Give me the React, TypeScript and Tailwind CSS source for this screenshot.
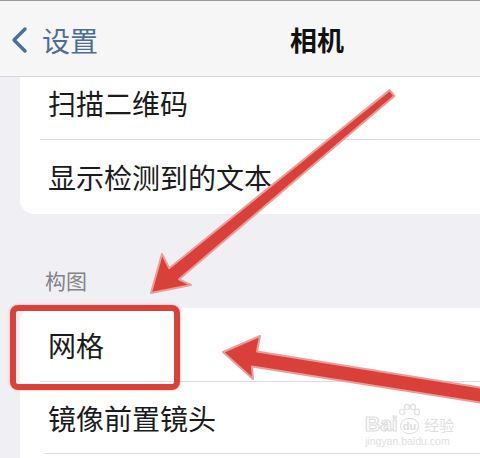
const FONT = { fontFamily: '"Noto Sans CJK SC", "Noto Sans", sans-serif' }

function BackChevron() {
  return (
    <svg width="22" height="28" viewBox="0 0 22 28" className="shrink-0">
      <polyline
        points="17,3 6,14 17,25"
        fill="none"
        stroke="#4a6f98"
        strokeWidth="3.4"
        strokeLinecap="round"
        strokeLinejoin="round"
      />
    </svg>
  )
}

function Row({ label, height, pad = "" }: { label: string; height: string; pad?: string }) {
  return (
    <div className={`flex items-center pl-[28px] ${height} ${pad}`}>
      <span className="text-[28px] leading-[32px] text-[#1b1b1d]">{label}</span>
    </div>
  )
}

function Arrows() {
  return (
    <svg width="480" height="458" viewBox="0 0 480 458" className="absolute left-0 top-0 pointer-events-none">
      {/* long arrow from top right down to the section */}
      <polygon
        points="389.6,90.1 169.2,268.3 162,254 151,293 191,285 179,279.3 394.4,95.9"
        fill="#d9403a"
        stroke="#ec9d97"
        strokeWidth="2"
        strokeLinejoin="round"
      />
      {/* arrow from the right pointing at the row */}
      <polygon
        points="223,352 260,336 257,351.5 490,389 490,404 252,366.5 253,379"
        fill="#d9403a"
        stroke="#ec9d97"
        strokeWidth="2"
        strokeLinejoin="round"
      />
    </svg>
  )
}

function Watermark() {
  return (
    <div className="absolute left-[365px] top-[414px] flex flex-col items-start opacity-60">
      <svg width="22" height="14" viewBox="0 0 22 14" className="absolute left-[33px] -top-[11px]">
        <circle cx="4" cy="9" r="2.6" fill="none" stroke="#cfcfcf" strokeWidth="1.3" />
        <circle cx="9" cy="4" r="2.6" fill="none" stroke="#cfcfcf" strokeWidth="1.3" />
        <circle cx="15" cy="4" r="2.6" fill="none" stroke="#cfcfcf" strokeWidth="1.3" />
        <circle cx="19" cy="9" r="2.6" fill="none" stroke="#cfcfcf" strokeWidth="1.3" />
      </svg>
      <div className="flex items-end gap-[2px]">
        <span
          className="text-[21px] leading-[20px] font-bold text-white"
          style={{ fontFamily: '"Liberation Sans", sans-serif', WebkitTextStroke: "1.2px #c8c8c8" }}
        >
          Bai
        </span>
        <span
          className="rounded-full border-[1.5px] border-[#c8c8c8] px-[2px] text-[11px] leading-[14px] font-bold text-[#c8c8c8]"
          style={{ fontFamily: '"Liberation Sans", sans-serif' }}
        >
          du
        </span>
        <span className="ml-[3px] text-[15px] leading-[18px] text-[#cbcbcb]" style={FONT}>
          经验
        </span>
      </div>
      <span
        className="mt-[1px] text-[10.5px] leading-[12px] text-[#cbcbcb]"
        style={{ fontFamily: '"Liberation Sans", sans-serif' }}
      >
        jingyan.baidu.com
      </span>
    </div>
  )
}

export default function App() {
  return (
    <div className="relative w-[480px] h-[458px] overflow-hidden bg-[#f0f0f4]" style={FONT}>
      <header className="flex h-[77px] items-center border-t border-b border-t-[#9a9a9a] border-b-[#d6d6d8] bg-[#f6f6f6] pl-[8px]">
        <div className="flex items-center gap-[12px] pt-[3px]">
          <BackChevron />
          <span className="text-[28px] leading-[32px] text-[#4b6e96]">设置</span>
        </div>
        <span className="ml-[192px] pt-[3px] text-[27px] leading-[32px] font-bold text-[#111]">相机</span>
      </header>

      <div className="ml-[20px] -mr-[20px] rounded-bl-[14px] bg-white">
        <Row label="扫描二维码" height="h-[62px]" pad="pb-[11px]" />
        <div className="ml-[20px] h-px bg-[#dcdcdf]" />
        <Row label="显示检测到的文本" height="h-[74px]" />
      </div>

      <div className="pl-[45px] pt-[54px] pb-[14px]">
        <span className="text-[21px] leading-[24px] text-[#828287]">构图</span>
      </div>

      <div className="ml-[20px] -mr-[20px] rounded-tl-[14px] bg-white">
        <Row label="网格" height="h-[73px]" />
        <div className="ml-[20px] h-px bg-[#dcdcdf]" />
        <Row label="镜像前置镜头" height="h-[71px]" />
        <div className="ml-[25px] h-px bg-[#dcdcdf]" />
        <div className="h-[20px]" />
      </div>

      <Watermark />

      <div className="absolute left-[10px] top-[305px] h-[85px] w-[170px] rounded-[8px] border-[6px] border-[#d8423b] shadow-[0_0_3px_#f2a9a3]" />

      <Arrows />
    </div>
  )
}
